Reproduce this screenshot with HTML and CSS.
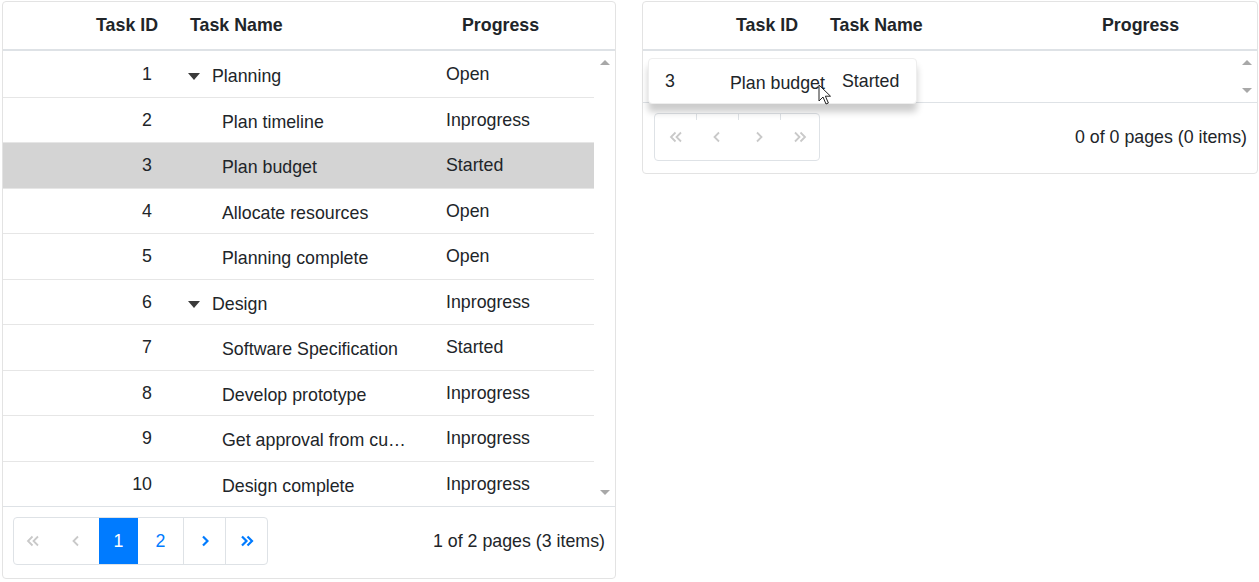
FILE: index.html
```html
<!DOCTYPE html>
<html>
<head>
<meta charset="utf-8">
<link rel="stylesheet" href="styles.css">
</head>
<body>
<div class="page">
  <div class="grid grid-left">
    <div class="header cols">
      <div class="hc hc-id">Task ID</div>
      <div class="hc hc-name">Task Name</div>
      <div class="hc hc-prog">Progress</div>
    </div>
    <div class="content content-left">
      <div class="rows">
        <div class="row cols"><div class="c-id">1</div><div class="c-name parent"><span class="caret"></span>Planning</div><div class="c-prog">Open</div></div>
        <div class="row cols"><div class="c-id">2</div><div class="c-name child">Plan timeline</div><div class="c-prog">Inprogress</div></div>
        <div class="row cols selected"><div class="c-id">3</div><div class="c-name child">Plan budget</div><div class="c-prog">Started</div></div>
        <div class="row cols"><div class="c-id">4</div><div class="c-name child">Allocate resources</div><div class="c-prog">Open</div></div>
        <div class="row cols"><div class="c-id">5</div><div class="c-name child">Planning complete</div><div class="c-prog">Open</div></div>
        <div class="row cols"><div class="c-id">6</div><div class="c-name parent"><span class="caret"></span>Design</div><div class="c-prog">Inprogress</div></div>
        <div class="row cols"><div class="c-id">7</div><div class="c-name child">Software Specification</div><div class="c-prog">Started</div></div>
        <div class="row cols"><div class="c-id">8</div><div class="c-name child">Develop prototype</div><div class="c-prog">Inprogress</div></div>
        <div class="row cols"><div class="c-id">9</div><div class="c-name child">Get approval from customer</div><div class="c-prog">Inprogress</div></div>
        <div class="row cols"><div class="c-id">10</div><div class="c-name child">Design complete</div><div class="c-prog">Inprogress</div></div>
      </div>
      <div class="vscroll">
        <span class="tri-up"></span>
        <span class="tri-down"></span>
      </div>
    </div>
    <div class="pager">
      <div class="pbox">
        <div class="pb w38 dis"><svg width="14" height="12" viewBox="0 0 14 12"><path d="M6.5 1.5 2 6l4.5 4.5M12 1.5 7.5 6l4.5 4.5" fill="none" stroke="currentColor" stroke-width="1.8"/></svg></div>
        <div class="pb w47 dis"><svg width="8" height="12" viewBox="0 0 8 12"><path d="M6 1.5 1.5 6 6 10.5" fill="none" stroke="currentColor" stroke-width="1.8"/></svg></div>
        <div class="pb w39 active">1</div>
        <div class="pb w45 num">2</div>
        <div class="pb w42 en sep"><svg width="8" height="12" viewBox="0 0 8 12"><path d="M2 1.5 6.5 6 2 10.5" fill="none" stroke="currentColor" stroke-width="2.2"/></svg></div>
        <div class="pb w42 en sep"><svg width="14" height="12" viewBox="0 0 14 12"><path d="M2 1.5 6.5 6 2 10.5M7.5 1.5 12 6l-4.5 4.5" fill="none" stroke="currentColor" stroke-width="2.2"/></svg></div>
      </div>
      <div class="pinfo">1 of 2 pages (3 items)</div>
    </div>
  </div>

  <div class="grid grid-right">
    <div class="header cols">
      <div class="hc hc-id">Task ID</div>
      <div class="hc hc-name">Task Name</div>
      <div class="hc hc-prog">Progress</div>
    </div>
    <div class="content content-right">
      <div class="rows"></div>
      <div class="vscroll">
        <span class="tri-up"></span>
        <span class="tri-down"></span>
      </div>
    </div>
    <div class="pager">
      <div class="pbox pbox-empty">
        <div class="pb w41 dis"><svg width="14" height="12" viewBox="0 0 14 12"><path d="M6.5 1.5 2 6l4.5 4.5M12 1.5 7.5 6l4.5 4.5" fill="none" stroke="currentColor" stroke-width="1.8"/></svg></div>
        <div class="pb w42 dis tick"><svg width="8" height="12" viewBox="0 0 8 12"><path d="M6 1.5 1.5 6 6 10.5" fill="none" stroke="currentColor" stroke-width="1.8"/></svg></div>
        <div class="pb w42 dis tick"><svg width="8" height="12" viewBox="0 0 8 12"><path d="M2 1.5 6.5 6 2 10.5" fill="none" stroke="currentColor" stroke-width="1.8"/></svg></div>
        <div class="pb w39 dis tick"><svg width="14" height="12" viewBox="0 0 14 12"><path d="M2 1.5 6.5 6 2 10.5M7.5 1.5 12 6l-4.5 4.5" fill="none" stroke="currentColor" stroke-width="1.8"/></svg></div>
      </div>
      <div class="pinfo">0 of 0 pages (0 items)</div>
    </div>
  </div>
</div>

<div class="drag-clone">
  <div class="dc-id">3</div>
  <div class="dc-name">Plan budget</div>
  <div class="dc-prog">Started</div>
</div>
<svg class="cursor" width="13" height="21" viewBox="0 0 13 21"><path d="M1 1v16l4-4 3 7 2.4-1-3-6.8H12.5Z" fill="#fff" stroke="#222" stroke-width="1" stroke-linejoin="round"/></svg>
</body>
</html>
```
FILE: styles.css
```css
* { box-sizing: border-box; }
body {
  margin: 0;
  font-family: "Liberation Sans", Arial, sans-serif;
  font-size: 17.8px;
  color: #212529;
  background: #fff;
}
.page {
  display: flex;
  align-items: flex-start;
  gap: 26px;
  padding: 1px 0 0 2px;
}
.grid {
  border: 1px solid #e3e3e3;
  border-radius: 4px;
  background: #fff;
  overflow: hidden;
}
.grid-left { width: 614px; }
.grid-right { width: 616px; }

.cols {
  display: grid;
  grid-template-columns: 167px 265px 1fr;
  align-items: center;
}
.header {
  height: 49px;
  border-bottom: 2px solid #dee2e6;
  font-weight: bold;
}
.hc-id { text-align: right; padding-right: 12px; }
.hc-name { padding-left: 20px; }
.hc-prog { padding-left: 27px; }

.content { display: flex; }
.content-left { height: 455px; }
.content-right { height: 51px; }
.rows { flex: 1; min-width: 0; }
.vscroll {
  width: 21px;
  position: relative;
}
.tri-up, .tri-down {
  position: absolute;
  left: 6px;
  width: 0; height: 0;
  border-left: 5px solid transparent;
  border-right: 5px solid transparent;
}
.tri-up { top: 9px; border-bottom: 5px solid #a8a8a8; }
.tri-down { bottom: 11px; border-top: 5px solid #a8a8a8; }
.content-right .tri-down { bottom: 9px; }

.row {
  height: 45.5px;
  border-top: 1px solid #e6e6e6;
}
.row:first-child { border-top: none; }
.row.selected { background: #d4d4d4; }
.c-id { text-align: right; padding-right: 18px; padding-top: 1px; }
.c-name {
  padding-top: 5px;
  white-space: nowrap;
  overflow: hidden;
  text-overflow: ellipsis;
  padding-right: 24px;
}
.c-name.child { padding-left: 52px; }
.c-name.parent { padding-left: 18px; display: flex; align-items: center; }
.caret {
  width: 0; height: 0;
  border-left: 6.5px solid transparent;
  border-right: 6.5px solid transparent;
  border-top: 7px solid #3a3a3a;
  margin-right: 12px;
  margin-top: 0;
}
.c-prog { padding-left: 11px; padding-top: 1px; }

.pager {
  border-top: 1px solid #dee2e6;
  padding: 10px 10px 13px 10px;
  display: flex;
  align-items: center;
  justify-content: space-between;
}
.grid-right .pager { padding: 10px 10px 12px 11px; }
.pbox {
  display: flex;
  height: 48px;
  border: 1px solid #dee2e6;
  border-radius: 4px;
  overflow: hidden;
}
.pb {
  display: flex;
  align-items: center;
  justify-content: center;
  height: 100%;
  position: relative;
}
.w38 { width: 38px; }
.w39 { width: 39px; }
.w41 { width: 41px; }
.w42 { width: 42px; }
.w45 { width: 45px; }
.w47 { width: 47px; }
.dis { color: #c9c9c9; }
.en { color: #007bff; }
.num { color: #007bff; }
.active { background: #007bff; color: #fff; }
.sep { border-left: 1px solid #dee2e6; }
.tick::before {
  content: "";
  position: absolute;
  left: 0; top: 0;
  width: 1px; height: 6px;
  background: #dee2e6;
}
.pinfo { white-space: nowrap; }

.drag-clone {
  position: absolute;
  left: 648px;
  top: 58px;
  width: 269px;
  height: 46px;
  background: #fff;
  border-radius: 4px;
  border: 1px solid #eeeeee;
  box-shadow: 0 8px 7px rgba(0,0,0,0.2);
  display: grid;
  grid-template-columns: 81px 112px 1fr;
  align-items: center;
  padding-top: 1px;
}
.dc-id { padding-left: 16px; }
.dc-name { padding-top: 3px; }
.cursor {
  position: absolute;
  left: 818px;
  top: 84px;
}
```
